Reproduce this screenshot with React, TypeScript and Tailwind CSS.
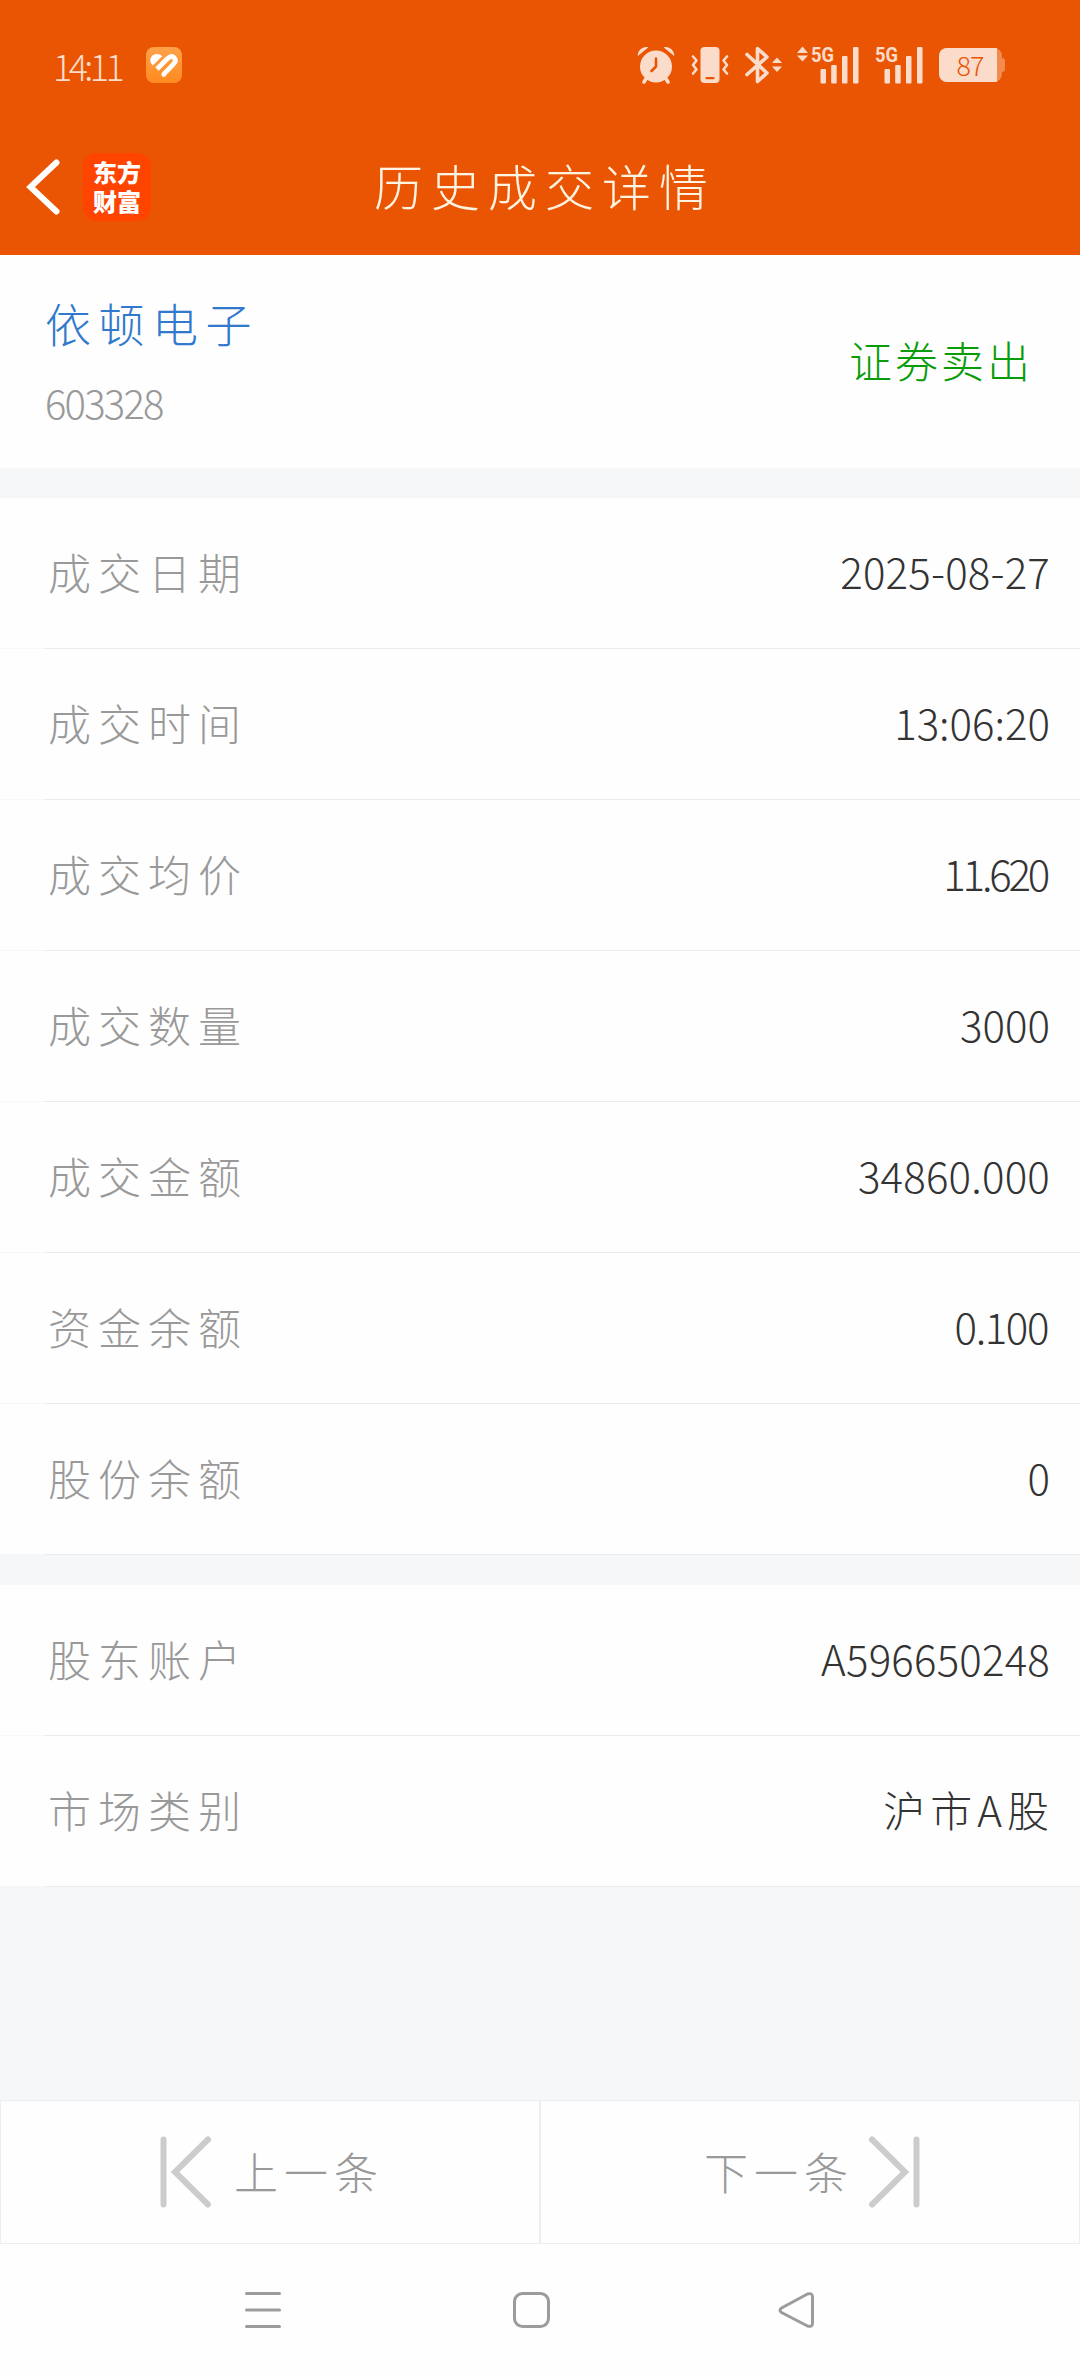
// src/App.tsx
import clsx from "clsx";

type Row = {
  label: string;
  value: string;
  spacing: string;
};

const tradeRows: Row[] = [
  { label: "成交日期", value: "2025-08-27", spacing: "tracking-[0.2px]" },
  { label: "成交时间", value: "13:06:20", spacing: "tracking-normal" },
  { label: "成交均价", value: "11.620", spacing: "tracking-[-3.2px] mr-[3px]" },
  { label: "成交数量", value: "3000", spacing: "tracking-normal" },
  { label: "成交金额", value: "34860.000", spacing: "tracking-[0.2px]" },
  { label: "资金余额", value: "0.100", spacing: "tracking-[-1.4px] mr-[2px]" },
  { label: "股份余额", value: "0", spacing: "tracking-normal" },
];

const accountRows: Row[] = [
  { label: "股东账户", value: "A596650248", spacing: "tracking-[0.2px]" },
  { label: "市场类别", value: "沪市A股", spacing: "tracking-[5px] -mr-[4px]" },
];

function SignalIcon({ data }: { data?: boolean }) {
  return (
    <svg className="overflow-visible" width="64" height="38" viewBox="0 0 64 38" fill="#fbdccb">
      {data && (
        <>
          <path d="M1 7 L6.5 0.5 L12 7z" />
          <path d="M1 9.5 L6.5 15.5 L12 9.5z" />
        </>
      )}
      <text x="15" y="16" fontSize="21" fontWeight="700" textLength="23" lengthAdjust="spacingAndGlyphs" className="font-['Roboto',sans-serif]">
        5G
      </text>
      <rect x="24.5" y="23" width="5.5" height="14.5" rx="1" />
      <rect x="35.2" y="19" width="5.5" height="18.5" rx="1" />
      <rect x="46" y="10" width="5.5" height="27.5" rx="1" />
      <rect x="57" y="1" width="5.5" height="36.5" rx="1" />
    </svg>
  );
}

function StatusBar() {
  return (
    <div className="flex h-[119px] items-center pt-[11px] pl-[53px]">
      <span className="w-[93px] text-[36px] font-light tracking-[-3.6px] text-[#fbdccb]">14:11</span>
      <svg width="36" height="36" viewBox="0 0 36 36">
        <defs>
          <linearGradient id="heart-bg" x1="0" y1="0" x2="0" y2="1">
            <stop offset="0" stopColor="#ffa24a" />
            <stop offset="1" stopColor="#ff8a1f" />
          </linearGradient>
        </defs>
        <rect width="36" height="36" rx="8" fill="url(#heart-bg)" />
        <path d="M6.8 18.6 C3.400 15.500 3.600 11 6.500 8.600 C9.500 6.300 13.400 6.600 16.200 9.200z" fill="#fff" />
        <path d="M11 22 L21.500 11.500 Q25.500 8 28.200 10.700 Q30.800 13.800 27.500 17.200 L17.500 27.400" fill="none" stroke="#fff" strokeWidth="4.8" />
        <circle cx="17.8" cy="27.600" r="2.4" fill="#fff" />
      </svg>

      <div className="ml-[455px] flex items-center">
        {/* alarm */}
        <svg width="38" height="38" viewBox="0 0 38 38" fill="none" stroke="#fbdccb">
          <path d="M0.800 10 C0.500 4 6 -0.300 11.500 1.200z M37.200 10 C37.500 4 32 -0.300 26.500 1.200z" fill="#fbdccb" stroke="none" />
          <circle cx="19" cy="20.5" r="16" fill="#fbdccb" stroke="none" />
          <path d="M9.500 32 L7 36 M28.500 32 L31 36" strokeWidth="3.5" strokeLinecap="round" />
          <path d="M19 12.500 V20.500 L14.500 25" stroke="#ea5504" strokeWidth="2.6" strokeLinecap="round" strokeLinejoin="round" />
        </svg>
        {/* vibrate */}
        <svg className="ml-4" width="38" height="38" viewBox="0 0 38 38" fill="none" stroke="#fbdccb" strokeWidth="2.6">
          <rect x="9.5" y="1" width="19" height="36" rx="4" fill="#fbdccb" stroke="none" />
          <path d="M15.500 32.200 h7" stroke="#ea5504" strokeWidth="2.2" strokeLinecap="round" />
          <path d="M2 10.500 L5.500 14.500 L2 19 L5.500 23.500 L2 27.500" strokeLinejoin="round" strokeLinecap="round" />
          <path d="M36 10.500 L32.500 14.500 L36 19 L32.500 23.500 L36 27.500" strokeLinejoin="round" strokeLinecap="round" />
        </svg>
        {/* bluetooth */}
        <svg className="ml-4" width="38" height="38" viewBox="0 0 38 38" fill="#fbdccb">
          <path d="M2 8.500 L22 27 L12.500 35.500 V2.500 L22 11 L2 28.500" fill="none" stroke="#fbdccb" strokeWidth="3.6" strokeLinejoin="round" strokeLinecap="round" />
          <path d="M27 17 L32 11.500 L37 17z M27 20.500 L32 26 L37 20.500z" />
        </svg>
        <span className="ml-[13px] flex">
          <SignalIcon data />
        </span>
        <span className="flex">
          <SignalIcon />
        </span>
        {/* battery */}
        <div className="ml-[15px] flex items-center">
          <div className="flex h-[34px] w-[63px] rounded-[8px] bg-[#f28b50]">
            <div className="flex w-[58px] items-center justify-center rounded-l-[8px] bg-[#fbdccb] pl-1 text-[27px] leading-[34px] font-light tracking-[-1px] text-[#ea5504]">
              87
            </div>
          </div>
          <div className="h-[14px] w-[3px] rounded-r-[3px] bg-[#f28b50]" />
        </div>
      </div>
    </div>
  );
}

function TitleBar() {
  return (
    <div className="grid h-[136px] grid-cols-[1fr_auto_1fr] items-center">
      <div className="flex items-center pl-[26px]">
        <svg width="34" height="56" viewBox="0 0 34 56" fill="none" stroke="#fff" strokeWidth="6">
          <path d="M30.500 3.500 L4.500 28 L30.500 52.500" strokeLinecap="round" strokeLinejoin="miter" />
        </svg>
        <div className="ml-[23px] flex h-[68px] w-[68px] items-center justify-center rounded-[14px] bg-[#ff4400] pb-[2px] text-[24px] leading-[29px] font-black text-white">
          <p>
            东方
            <br />
            财富
          </p>
        </div>
      </div>
      <h1 className="mb-[5px] -mr-[5px] ml-[5px] text-[49px] leading-[60px] font-light tracking-[8px] text-[#fff3e2]">历史成交详情</h1>
    </div>
  );
}

function DetailRow({ label, value, spacing }: Row) {
  return (
    <div className="h-[151px]">
      <div className="flex h-[150px] items-center justify-between pr-[30px] pb-[4px] pl-[48px]">
        <span className="text-[43px] leading-[60px] font-light tracking-[7px] text-[#999]">{label}</span>
        <span className={clsx("text-[42px] leading-[60px] font-light text-[#333]", spacing)}>{value}</span>
      </div>
      <div className="flex h-px">
        <div className="w-[45px] bg-[#f7f7f7]" />
        <div className="flex-1 bg-[#ebebeb]" />
      </div>
    </div>
  );
}

export default function App() {
  return (
    <div className="flex h-[2376px] w-[1080px] flex-col overflow-hidden bg-[#f6f7f9] font-['Noto_Sans_CJK_SC',sans-serif]">
      <header className="h-[255px] bg-[#ea5504]">
        <StatusBar />
        <TitleBar />
      </header>

      {/* stock */}
      <section className="flex h-[213px] items-center justify-between bg-[#fefefe] pr-[47px] pl-[45px]">
        <div className="flex flex-col gap-[20px]">
          <span className="text-[46px] leading-[60px] font-light tracking-[7.5px] text-[#3079cc]">依顿电子</span>
          <span className="text-[40px] leading-[60px] font-light tracking-[-1.8px] text-[#999]">603328</span>
        </div>
        <span className="mb-[6px] text-[43px] leading-[60px] font-light tracking-[3px] text-[#099c09]">证券卖出</span>
      </section>

      <section className="mt-[30px] bg-[#fefefe]">
        {tradeRows.map((r) => (
          <DetailRow key={r.label} {...r} />
        ))}
      </section>

      <section className="mt-[30px] bg-[#fefefe]">
        {accountRows.map((r) => (
          <DetailRow key={r.label} {...r} />
        ))}
      </section>

      <div className="mt-auto grid h-[144px] grid-cols-2 bg-[#fefefe] text-[44px] leading-[60px] font-light tracking-[6px] text-[#999]">
        <button className="flex items-center border border-[#ebedef] pl-[159px]">
          <svg width="51" height="74" viewBox="0 0 51 74" fill="none" stroke="#ccc" strokeWidth="6" strokeLinecap="round">
            <path d="M3.500 4.500 V69.500 M48 4.500 L15 37 L48 69.500" />
          </svg>
          <span className="mb-[3px] ml-[23px]">上一条</span>
        </button>
        <button className="flex items-center justify-end border border-[#ebedef] pr-[159px]">
          <span className="mr-[15px] mb-[3px]">下一条</span>
          <svg width="51" height="74" viewBox="0 0 51 74" fill="none" stroke="#ccc" strokeWidth="6" strokeLinecap="round">
            <path d="M47.500 4.500 V69.500 M3 4.500 L36 37 L3 69.500" />
          </svg>
        </button>
      </div>

      {/* system navigation */}
      <nav className="flex h-[132px] items-center bg-[#fefefe] pl-[244px]">
        <svg width="38" height="38" viewBox="0 0 38 38" stroke="#9c9c9c" strokeWidth="3" strokeLinecap="round">
          <path d="M2.500 2.500 H35.500 M2.500 19 H35.500 M2.500 35.500 H35.500" />
        </svg>
        <svg className="ml-[230px]" width="38" height="38" viewBox="0 0 38 38" fill="none" stroke="#9c9c9c" strokeWidth="3">
          <rect x="2.5" y="2.5" width="34" height="33" rx="8" />
        </svg>
        <svg className="ml-[228px]" width="38" height="38" viewBox="0 0 38 38" fill="none" stroke="#9c9c9c" strokeWidth="3" strokeLinejoin="round">
          <path d="M3.500 17 L29.500 3 Q34.500 1.500 34.500 6 V32 Q34.500 36.500 29.500 35 L3.500 21.500 Q0.500 19.200 3.500 17z" />
        </svg>
      </nav>
    </div>
  );
}
